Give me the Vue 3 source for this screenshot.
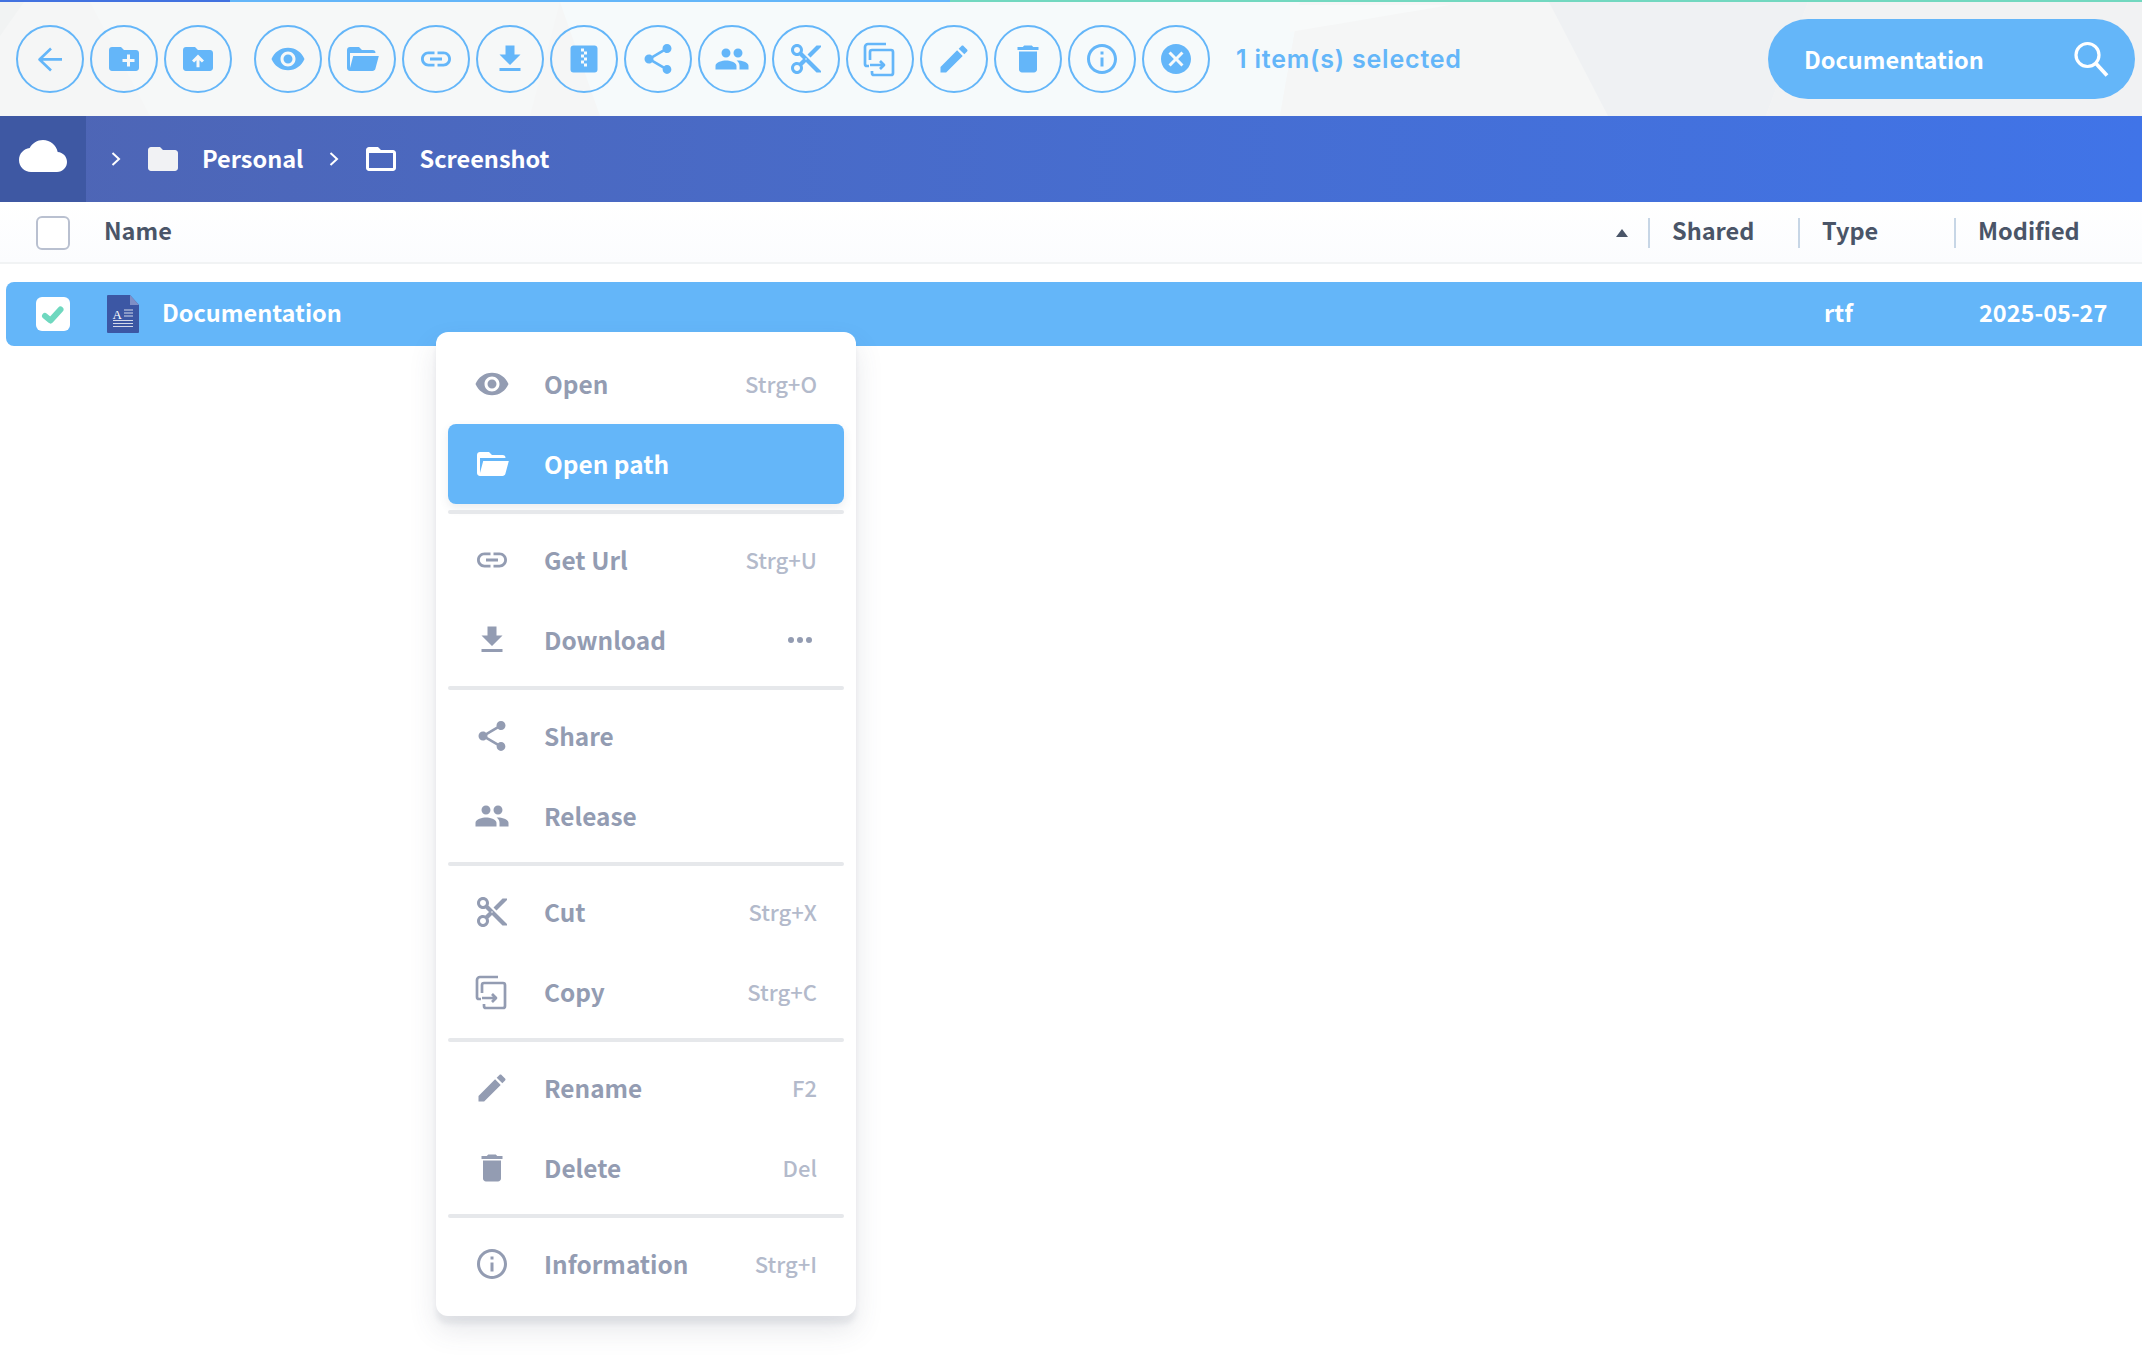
<script setup>
const P = {
  folderAdd: 'M20 6h-8l-2-2H4c-1.11 0-1.99.89-1.99 2L2 18c0 1.11.89 2 2 2h16c1.11 0 2-.89 2-2V8c0-1.11-.89-2-2-2zm-1 8h-3v3h-2v-3h-3v-2h3V9h2v3h3v2z',
  folderUp: 'M20 6h-8l-2-2H4c-1.11 0-1.99.89-1.99 2L2 18c0 1.11.89 2 2 2h16c1.11 0 2-.89 2-2V8c0-1.11-.89-2-2-2zM13 17.5h-2v-4.7l-1.6 1.6L8 13l4-4 4 4-1.4 1.4-1.6-1.6v4.7z',
  eye: 'M12 4.5C7 4.5 2.73 7.61 1 12c1.73 4.39 6 7.5 11 7.5s9.27-3.11 11-7.5c-1.73-4.39-6-7.5-11-7.5zM12 17c-2.76 0-5-2.24-5-5s2.24-5 5-5 5 2.24 5 5-2.24 5-5 5zm0-8c-1.66 0-3 1.34-3 3s1.34 3 3 3 3-1.34 3-3-1.34-3-3-3z',
  folderOpen: 'M19 20H4c-1.11 0-2-.9-2-2V6c0-1.11.89-2 2-2h6l2 2h7a2 2 0 0 1 2 2H4v10l2.14-8h17.07l-2.28 8.5c-.23.87-1.01 1.5-1.93 1.5z',
  link: 'M3.9 12c0-1.71 1.39-3.1 3.1-3.1h4V7H7c-2.76 0-5 2.24-5 5s2.24 5 5 5h4v-1.9H7c-1.71 0-3.1-1.39-3.1-3.1zM8 13h8v-2H8v2zm9-6h-4v1.9h4c1.71 0 3.1 1.39 3.1 3.1s-1.39 3.1-3.1 3.1h-4V17h4c2.76 0 5-2.24 5-5s-2.24-5-5-5z',
  download: 'M19 9h-4V3H9v6H5l7 7 7-7zM5 18v2h14v-2H5z',
  zip: 'M14 17h-2v-2h-2v-2h2v2h2M14 9h-2v2h2v2h-2v-2h-2V9h2V7h-2V5h2v2h2M19 3H5c-1.11 0-2 .89-2 2v14a2 2 0 0 0 2 2h14a2 2 0 0 0 2-2V5c0-1.11-.9-2-2-2z',
  share: 'M18 16.08c-.76 0-1.44.3-1.96.77L8.91 12.7c.05-.23.09-.46.09-.7s-.04-.47-.09-.7l7.05-4.11c.54.5 1.25.81 2.04.81 1.66 0 3-1.34 3-3s-1.34-3-3-3-3 1.34-3 3c0 .24.04.47.09.7L8.04 9.81C7.5 9.31 6.79 9 6 9c-1.66 0-3 1.34-3 3s1.34 3 3 3c.79 0 1.5-.31 2.04-.81l7.12 4.16c-.05.21-.08.43-.08.65 0 1.61 1.31 2.92 2.92 2.92 1.61 0 2.92-1.31 2.92-2.92s-1.31-2.92-2.92-2.92z',
  people: 'M16 11c1.66 0 2.99-1.34 2.99-3S17.66 5 16 5c-1.66 0-3 1.34-3 3s1.34 3 3 3zm-8 0c1.66 0 2.99-1.34 2.99-3S9.66 5 8 5C6.34 5 5 6.34 5 8s1.34 3 3 3zm0 2c-2.33 0-7 1.17-7 3.5V19h14v-2.5c0-2.33-4.67-3.5-7-3.5zm8 0c-.29 0-.62.02-.97.05 1.16.84 1.97 1.97 1.97 3.45V19h6v-2.5c0-2.33-4.67-3.5-7-3.5z',
  cut: 'M9.64 7.64c.23-.5.36-1.05.36-1.64 0-2.21-1.79-4-4-4S2 3.79 2 6s1.79 4 4 4c.59 0 1.14-.13 1.64-.36L10 12l-2.36 2.36C7.14 14.13 6.59 14 6 14c-2.21 0-4 1.79-4 4s1.79 4 4 4 4-1.79 4-4c0-.59-.13-1.14-.36-1.64L12 14l7 7h3v-1L9.64 7.64zM6 8c-1.1 0-2-.89-2-2s.9-2 2-2 2 .89 2 2-.9 2-2 2zm0 12c-1.1 0-2-.89-2-2s.9-2 2-2 2 .89 2 2-.9 2-2 2zm6-7.5c-.28 0-.5-.22-.5-.5s.22-.5.5-.5.5.22.5.5-.22.5-.5.5zM19 3l-6 6 2 2 7-7V3z',
  edit: 'M3 17.25V21h3.75L17.81 9.94l-3.75-3.75L3 17.25zM20.71 7.04c.39-.39.39-1.02 0-1.41l-2.34-2.34c-.39-.39-1.02-.39-1.41 0l-1.83 1.83 3.75 3.75 1.83-1.83z',
  trash: 'M6 19c0 1.1.9 2 2 2h8c1.1 0 2-.9 2-2V7H6v12zM19 4h-3.5l-1-1h-5l-1 1H5v2h14V4z',
  info: 'M11 7h2v2h-2zm0 4h2v6h-2zm1-9C6.48 2 2 6.48 2 12s4.48 10 10 10 10-4.48 10-10S17.52 2 12 2zm0 18c-4.41 0-8-3.59-8-8s3.59-8 8-8 8 3.59 8 8-3.59 8-8 8z',
  cancel: 'M12 2C6.47 2 2 6.47 2 12s4.47 10 10 10 10-4.47 10-10S17.53 2 12 2zm5 13.59L15.59 17 12 13.41 8.41 17 7 15.59 10.59 12 7 8.41 8.41 7 12 10.59 15.59 7 17 8.41 13.41 12 17 15.59z',
  cloud: 'M19.35 10.04C18.67 6.59 15.64 4 12 4 9.11 4 6.6 5.64 5.35 8.04 2.34 8.36 0 10.91 0 14c0 3.31 2.69 6 6 6h13c2.76 0 5-2.24 5-5 0-2.64-2.05-4.78-4.65-4.96z',
  folder: 'M10 4H4c-1.1 0-1.99.9-1.99 2L2 18c0 1.1.9 2 2 2h16c1.1 0 2-.9 2-2V8c0-1.1-.9-2-2-2h-8l-2-2z',
  folderLine: 'M20 6h-8l-2-2H4c-1.1 0-1.99.9-1.99 2L2 18c0 1.1.9 2 2 2h16c1.1 0 2-.9 2-2V8c0-1.1-.9-2-2-2zm0 12H4V8h16v10z'
}
const COPY = 'M24 3H6a3 3 0 0 0-3 3v17a2 2 0 0 0 2 2h2M8 19v-8a2 2 0 0 1 2-2h19a2 2 0 0 1 2 2v21a2 2 0 0 1-2 2H12a2 2 0 0 1-2-2v-2M8 24h14M18 20l4 4-4 4'
const BACK = 'M30 18.4H8M19 7.5L7.5 18.5 19 29.5'

const firstGroup = [
  { s: BACK, w: 2.6 },
  { d: P.folderAdd },
  { d: P.folderUp }
]
const secondGroup = [
  { d: P.eye }, { d: P.folderOpen }, { d: P.link }, { d: P.download }, { d: P.zip },
  { d: P.share }, { d: P.people }, { d: P.cut }, { s: COPY, w: 2.7 }, { d: P.edit },
  { d: P.trash }, { d: P.info }, { d: P.cancel }
]
const menu = [
  [
    { label: 'Open', d: P.eye, key: 'Strg+O' },
    { label: 'Open path', d: P.folderOpen, active: true }
  ],
  [
    { label: 'Get Url', d: P.link, key: 'Strg+U' },
    { label: 'Download', d: P.download, more: true }
  ],
  [
    { label: 'Share', d: P.share },
    { label: 'Release', d: P.people }
  ],
  [
    { label: 'Cut', d: P.cut, key: 'Strg+X' },
    { label: 'Copy', s: COPY, w: 2.7, key: 'Strg+C' }
  ],
  [
    { label: 'Rename', d: P.edit, key: 'F2' },
    { label: 'Delete', d: P.trash, key: 'Del' }
  ],
  [
    { label: 'Information', d: P.info, key: 'Strg+I' }
  ]
]
</script>

<template>
  <div class="page">
    <div class="strip">
      <span class="strip-a"></span><span class="strip-b"></span><span class="strip-c"></span>
    </div>

    <header class="toolbar">
      <svg class="toolbar-bg" viewBox="0 0 2142 114" preserveAspectRatio="none">
        <rect width="2142" height="114" fill="#f5f6f6" />
        <polygon points="0,0 24,0 0,34" fill="#f1f3f3" />
        <polygon points="90,0 560,0 530,114 150,114" fill="#f6f8f8" />
        <polygon points="560,0 1300,0 1280,114 600,114" fill="#f6fafb" />
        <polygon points="1300,0 1549,0 1608,114 1280,114" fill="#f5f6f6" />
        <polygon points="1290,3 1450,3 1290,30" fill="#f8fafa" />
        <polygon points="1549,0 1808,0 1766,114 1608,114" fill="#eff1f3" />
        <polygon points="1808,0 2142,0 2142,114 1766,114" fill="#f1f2f3" />
      </svg>

      <div class="tool-group">
        <button v-for="(t, i) in firstGroup" :key="i" class="tool" type="button">
          <svg v-if="t.s" class="ico" viewBox="0 0 36 36"><path :d="t.s" fill="none" stroke="currentColor" :stroke-width="t.w" stroke-linejoin="round" /></svg>
          <svg v-else class="ico" viewBox="0 0 24 24"><path :d="t.d" fill="currentColor" fill-rule="evenodd" /></svg>
        </button>
      </div>
      <div class="tool-group second">
        <button v-for="(t, i) in secondGroup" :key="i" class="tool" type="button">
          <svg v-if="t.s" class="ico" viewBox="0 0 36 36"><path :d="t.s" fill="none" stroke="currentColor" :stroke-width="t.w" stroke-linejoin="round" /></svg>
          <svg v-else class="ico" viewBox="0 0 24 24"><path :d="t.d" fill="currentColor" fill-rule="evenodd" /></svg>
        </button>
      </div>
      <span class="selected">1 item(s) selected</span>

      <div class="search">
        <span class="search-text">Documentation</span>
        <svg class="search-ico" viewBox="0 0 36 36">
          <circle cx="14.5" cy="14" r="11.5" fill="none" stroke="#fff" stroke-width="3.2" />
          <path d="M23 22.5L34 34.5" fill="none" stroke="#fff" stroke-width="3.8" />
        </svg>
      </div>
    </header>

    <nav class="crumbs">
      <div class="home">
        <svg class="cloud" viewBox="0 4 24 16" preserveAspectRatio="none"><path :d="P.cloud" fill="#fff" /></svg>
      </div>
      <svg class="chev first" viewBox="0 0 10 14"><path d="M1.5 1l6.5 6-6.5 6" fill="none" stroke="#fff" stroke-width="2" /></svg>
      <svg class="crumb-ico" viewBox="0 0 24 24"><path :d="P.folder" fill="#f1f2f4" /></svg>
      <span class="crumb-text">Personal</span>
      <svg class="chev" viewBox="0 0 10 14"><path d="M1.5 1l6.5 6-6.5 6" fill="none" stroke="#fff" stroke-width="2" /></svg>
      <svg class="crumb-ico" viewBox="0 0 24 24"><path :d="P.folderLine" fill="#fff" /></svg>
      <span class="crumb-text">Screenshot</span>
    </nav>

    <div class="table-head">
      <span class="box"></span>
      <span class="col-name">Name</span>
      <span class="sort"></span>
      <span class="col col-shared">Shared</span>
      <span class="col col-type">Type</span>
      <span class="col col-mod">Modified</span>
    </div>

    <div class="row">
      <span class="box checked">
        <svg viewBox="0 0 34 34"><path d="M9 19l5.5 4.5L24.5 12.5" fill="none" stroke="#6fd8bf" stroke-width="6" stroke-linecap="round" stroke-linejoin="round" /></svg>
      </span>
      <svg class="doc" viewBox="0 0 32 38">
        <path d="M1 0h22l9 10v27a1 1 0 0 1-1 1H1a1 1 0 0 1-1-1V1a1 1 0 0 1 1-1z" fill="#3c57a4" />
        <path d="M23 0l9 10h-9z" fill="#7f8fc6" />
        <text x="5.5" y="23.5" class="doc-a">A</text>
        <path d="M17 15h9M17 18h9M17 21h9M6 25.5h20M6 28.5h20M6 31.5h20" stroke="#d4d9e9" stroke-width="1.2" />
      </svg>
      <span class="row-name">Documentation</span>
      <span class="row-type">rtf</span>
      <span class="row-date">2025-05-27</span>
    </div>

    <div class="menu">
      <template v-for="(group, g) in menu" :key="g">
        <hr v-if="g > 0" class="divider" />
        <div v-for="item in group" :key="item.label" class="item" :class="{ active: item.active }">
          <span class="item-ico">
            <svg v-if="item.s" viewBox="0 0 36 36"><path :d="item.s" fill="none" stroke="currentColor" :stroke-width="item.w" stroke-linejoin="round" /></svg>
            <svg v-else viewBox="0 0 24 24"><path :d="item.d" fill="currentColor" fill-rule="evenodd" /></svg>
          </span>
          <span class="item-label">{{ item.label }}</span>
          <span v-if="item.key" class="item-key">{{ item.key }}</span>
          <span v-if="item.more" class="item-more"><i></i><i></i><i></i></span>
        </div>
      </template>
    </div>
  </div>
</template>

<style scoped>
.page {
  position: relative;
  width: 2142px;
  height: 1358px;
  overflow: hidden;
  background: #fff;
  font-family: "Noto Sans CJK SC", "Noto Sans", sans-serif;
  font-weight: 700;
  font-size: 23.5px;
  line-height: 1.2;
}
.strip { display: flex; height: 2px; }
.strip-a { width: 230px; background: #4272e0; }
.strip-b { width: 720px; background: #64b6f9; }
.strip-c { flex: 1; background: #72d8c0; }

.toolbar {
  position: relative;
  display: flex;
  align-items: center;
  height: 114px;
  padding: 0 7px 0 16px;
  box-sizing: border-box;
}
.toolbar-bg { position: absolute; inset: 0; width: 100%; height: 100%; }
.tool-group { position: relative; display: flex; gap: 6px; }
.tool-group.second { margin-left: 22px; }
.tool {
  display: flex;
  align-items: center;
  justify-content: center;
  width: 68px;
  height: 68px;
  padding: 0;
  border: 2px solid #64b6f9;
  border-radius: 50%;
  background: transparent;
  color: #64b6f9;
  box-sizing: border-box;
}
.ico { width: 36px; height: 36px; display: block; }
.selected {
  position: relative;
  margin-left: 26px;
  color: #64b6f9;
  font-family: Inter, "Noto Sans", sans-serif;
  font-weight: 600;
  font-size: 25px;
  letter-spacing: 0.8px;
}
.search {
  position: relative;
  display: flex;
  align-items: center;
  justify-content: space-between;
  width: 367px;
  height: 80px;
  margin-left: auto;
  padding: 0 26px 0 36px;
  border-radius: 40px;
  background: #64b6f9;
  color: #fff;
  box-sizing: border-box;
}
.search-ico { width: 36px; height: 36px; display: block; }

.crumbs {
  display: flex;
  align-items: center;
  height: 86px;
  background: linear-gradient(90deg, #4e65b4 0%, #4074e8 100%);
  color: #fff;
}
.home {
  display: flex;
  align-items: center;
  justify-content: center;
  width: 86px;
  height: 100%;
  background: #3e58a3;
}
.cloud { width: 48px; height: 32px; display: block; margin-top: -6px; }
.chev { width: 10px; height: 14px; margin-left: 25px; display: block; }
.crumb-ico { width: 36px; height: 36px; margin-left: 24px; display: block; }
.crumb-text { padding-bottom: 2px; }
.crumb-ico + .crumb-text { margin-left: 21px; }

.table-head {
  display: flex;
  align-items: center;
  height: 62px;
  padding: 2px 0 0 36px;
  border-bottom: 2px solid #f1f3f4;
  background: linear-gradient(180deg, #fff, #fbfcfe);
  color: #4a5568;
  box-sizing: border-box;
}
.box {
  display: block;
  flex: none;
  width: 34px;
  height: 34px;
  border: 2px solid #b9c0d0;
  border-radius: 6px;
  background: #fff;
  box-sizing: border-box;
}
.box.checked { border: none; }
.box.checked svg { display: block; width: 34px; height: 34px; }
.col-name { flex: 1; margin-left: 34px; padding-bottom: 5px; }
.sort {
  width: 0;
  height: 0;
  margin-right: 20px;
  border-left: 6px solid transparent;
  border-right: 6px solid transparent;
  border-bottom: 8px solid #4a5568;
}
.col {
  height: 30px;
  line-height: 25px;
  padding-left: 22px;
  border-left: 2px solid #c7d6e6;
  box-sizing: border-box;
}
.col-shared { width: 150px; }
.col-type { width: 156px; }
.col-mod { width: 188px; }

.row {
  display: flex;
  align-items: center;
  height: 64px;
  margin: 18px 0 0 6px;
  padding-left: 30px;
  border-radius: 8px 0 0 8px;
  background: #64b6f9;
  color: #fff;
}
.doc { width: 32px; height: 38px; margin-left: 37px; display: block; flex: none; }
.doc-a {
  font-family: "Liberation Serif", serif;
  font-size: 13px;
  font-weight: 400;
  fill: #fff;
}
.row-name { flex: 1; margin-left: 23px; padding-bottom: 3px; }
.row-type { width: 156px; padding: 0 0 3px 26px; box-sizing: border-box; }
.row-date { width: 188px; padding: 0 0 3px 25px; box-sizing: border-box; }

.menu {
  position: absolute;
  left: 436px;
  top: 332px;
  width: 420px;
  padding: 12px;
  border-radius: 12px;
  background: #fff;
  box-shadow: 0 14px 28px rgba(70, 80, 100, 0.13), 0 8px 5px rgba(70, 80, 100, 0.08);
  box-sizing: border-box;
}
.item {
  display: flex;
  align-items: center;
  height: 80px;
  padding: 0 27px 0 26px;
  border-radius: 8px;
  color: #939cb2;
  box-sizing: border-box;
}
.item.active {
  background: #64b6f9;
  color: #fff;
  box-shadow: 0 4px 10px rgba(70, 80, 100, 0.1);
}
.item-ico { width: 36px; height: 36px; flex: none; }
.item-ico svg { width: 36px; height: 36px; display: block; }
.item-label { flex: 1; margin-left: 34px; font-size: 24.4px; }
.item-key { color: #b3bacb; font-size: 22px; font-weight: 500; padding-bottom: 2px; }
.item-more { display: flex; gap: 3px; margin-right: 5px; }
.item-more i { width: 6px; height: 6px; border-radius: 50%; background: #939cb2; }
.divider {
  height: 4px;
  margin: 6px 0;
  border: 0;
  border-radius: 2px;
  background: #e6e8eb;
}
</style>
